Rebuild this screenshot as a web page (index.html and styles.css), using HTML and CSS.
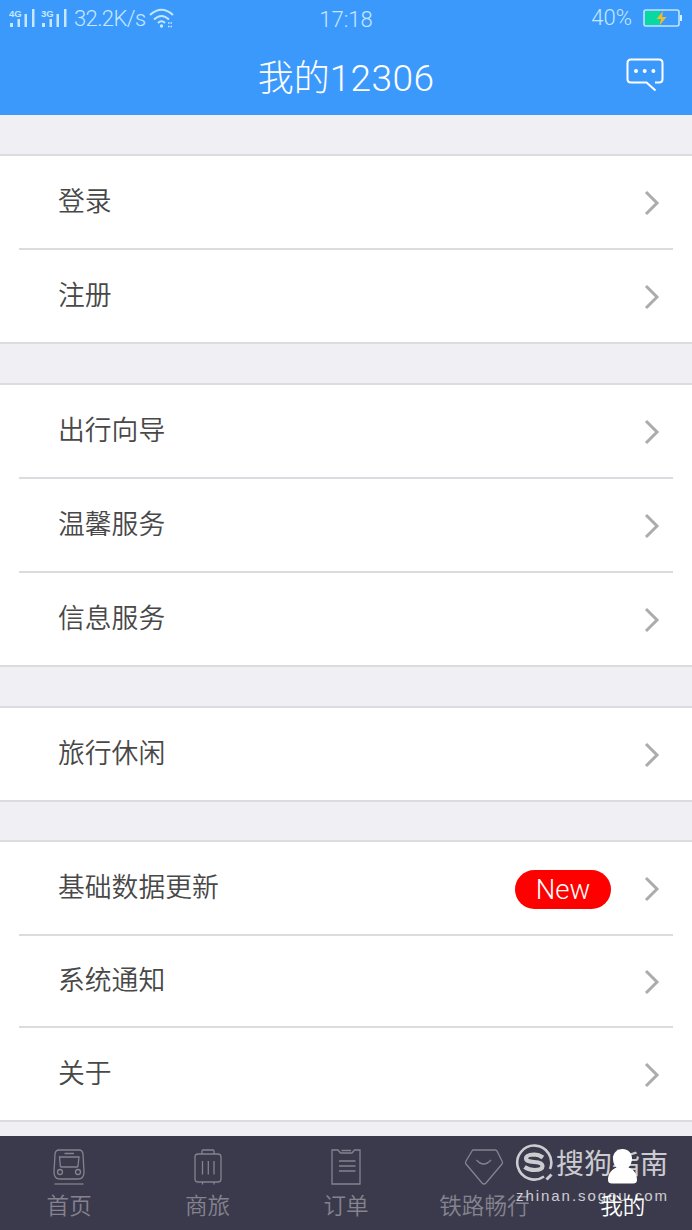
FILE: index.html
```html
<!DOCTYPE html>
<html lang="zh-CN">
<head>
  <meta charset="UTF-8">
  <title>我的12306</title>
  <link rel="stylesheet" href="styles.css">
</head>
<body>
  <header class="header">
    <div class="status-bar">
      <div class="status-left">
        <svg class="signal" width="58" height="20" viewBox="0 0 58 20">
          <g fill="currentColor">
            <rect x="1" y="15" width="3" height="4"/>
            <rect x="8.500" y="11" width="2.500" height="8"/>
            <rect x="15.500" y="6" width="2.500" height="13"/>
            <rect x="23" y="1" width="2.500" height="18"/>
            <rect x="33" y="15" width="3" height="4"/>
            <rect x="40.500" y="11" width="2.500" height="8"/>
            <rect x="47.500" y="6" width="2.500" height="13"/>
            <rect x="55" y="1" width="2.500" height="18"/>
            <text x="0" y="8.500" class="signal-text">4G</text>
            <text x="32" y="8.500" class="signal-text">3G</text>
          </g>
        </svg>
        <span class="speed">32.2K/s</span>
        <svg class="wifi" width="26" height="20" viewBox="0 0 26 20">
          <g fill="none" stroke="currentColor" stroke-width="2">
            <path d="M1 7Q12.500 -3.500 24 7"/>
            <path d="M5 11.500Q12.500 4.500 20 11.500"/>
            <path d="M9 15Q12.500 11.500 16 15"/>
          </g>
          <circle cx="12.500" cy="18" r="1.700" fill="currentColor"/>
          <path d="M19 15h4M19 18.500h4" stroke="currentColor" stroke-width="1.500" stroke-dasharray="1.500 1"/>
        </svg>
      </div>
      <span class="time">17:18</span>
      <div class="status-right">
        <span>40%</span>
        <svg class="battery" width="40" height="18" viewBox="0 0 40 18">
          <rect x="2" y="2" width="15" height="14" fill="#08d9a0"/>
          <rect x="1" y="1" width="35" height="16" rx="2" fill="none" stroke="#bfe6ff" stroke-width="1.600"/>
          <rect x="37" y="6" width="2" height="6" fill="#d5efff"/>
          <path d="M20 2L13.500 10H18L16.500 16.500L23.500 8H19Z" fill="#f2bd2c"/>
        </svg>
      </div>
    </div>
    <div class="title-bar">
      <h1>我的<span class="digits">12306</span></h1>
      <svg class="message" width="38" height="34" viewBox="0 0 38 34">
        <path d="M29 24.500H33Q36.500 24.500 36.500 21V5Q36.500 1.500 33 1.500H5Q1.500 1.500 1.500 5V21Q1.500 24.500 5 24.500H20.500L29.500 32.500" fill="none" stroke="#fff" stroke-width="2"/>
        <g fill="#fff"><circle cx="10" cy="13" r="2"/><circle cx="18.700" cy="13" r="2"/><circle cx="27.400" cy="13" r="2"/></g>
      </svg>
    </div>
  </header>

  <main class="menu">
    <section class="group">
      <a class="item"><span>登录</span><svg class="arrow" viewBox="0 0 16 26"><path d="M2 2L13 13L2 24"/></svg></a>
      <a class="item"><span>注册</span><svg class="arrow" viewBox="0 0 16 26"><path d="M2 2L13 13L2 24"/></svg></a>
    </section>
    <section class="group">
      <a class="item"><span>出行向导</span><svg class="arrow" viewBox="0 0 16 26"><path d="M2 2L13 13L2 24"/></svg></a>
      <a class="item"><span>温馨服务</span><svg class="arrow" viewBox="0 0 16 26"><path d="M2 2L13 13L2 24"/></svg></a>
      <a class="item"><span>信息服务</span><svg class="arrow" viewBox="0 0 16 26"><path d="M2 2L13 13L2 24"/></svg></a>
    </section>
    <section class="group">
      <a class="item"><span>旅行休闲</span><svg class="arrow" viewBox="0 0 16 26"><path d="M2 2L13 13L2 24"/></svg></a>
    </section>
    <section class="group group-last">
      <a class="item"><span>基础数据更新</span><b class="badge">New</b><svg class="arrow" viewBox="0 0 16 26"><path d="M2 2L13 13L2 24"/></svg></a>
      <a class="item item-short"><span>系统通知</span><svg class="arrow" viewBox="0 0 16 26"><path d="M2 2L13 13L2 24"/></svg></a>
      <a class="item"><span>关于</span><svg class="arrow" viewBox="0 0 16 26"><path d="M2 2L13 13L2 24"/></svg></a>
    </section>
  </main>

  <nav class="tabs">
    <a class="tab">
      <svg width="40" height="38" viewBox="0 0 40 38">
        <path d="M10 2H30Q33.500 2 34 6L35 24Q35 31 29 31H11Q5 31 5 24L6 6Q6.500 2 10 2Z"/>
        <path d="M15.500 5.500H25M10.500 9H30L29 18Q28.800 19 27.500 19H13Q11.500 19 11.300 18Z"/>
        <circle cx="11" cy="24" r="2.500"/><circle cx="29" cy="24" r="2.500"/>
        <path d="M5.500 36H34.500"/>
      </svg>
      <span>首页</span>
    </a>
    <a class="tab">
      <svg width="40" height="38" viewBox="0 0 40 38">
        <rect x="7" y="6" width="26" height="28" rx="3"/>
        <path d="M14 6V3Q14 2 15 2H25Q26 2 26 3V6M14.500 13V26.500M20.300 13V26.500M26 13V26.500M14.500 34V36.500M26 34V36.500"/>
      </svg>
      <span>商旅</span>
    </a>
    <a class="tab">
      <svg width="40" height="38" viewBox="0 0 40 38">
        <path d="M6 2H12L14.500 5H26L28.500 2H34V36H6ZM15.500 2.500H25M13 13H29.500M13 18H29.500M13 23H29.500"/>
      </svg>
      <span>订单</span>
    </a>
    <a class="tab">
      <svg width="40" height="38" viewBox="0 0 40 38">
        <path d="M9 2H31Q32 2 33 3L38 13Q39 15 38 16L22 35Q20 37 18 35L2 16Q1 15 2 13L8 3Q8.500 2 9 2ZM12.500 12Q19.500 20 27 12"/>
      </svg>
      <span>铁路畅行</span>
    </a>
    <a class="tab active">
      <svg width="40" height="38" viewBox="0 0 40 38">
        <path d="M19.500 1C25 1 29 5 29 10.500C29 14 27.500 17.500 25.500 19.500C30.500 21.500 34 25 34 32Q34 35.500 30 35.500H9Q5 35.500 5 32C5 25 9 21.500 13.500 19.500C11 17.500 10 14 10 10.500C10 5 14 1 19.500 1Z"/>
      </svg>
      <span>我的</span>
    </a>
  </nav>

  <!-- 水印 -->
  <div class="watermark">
    <div class="watermark-top">
      <svg width="38" height="38" viewBox="0 0 38 38">
        <path d="M29 33.500A17 17 0 1 1 35 26" fill="none" stroke="currentColor" stroke-width="2.600"/>
        <path d="M28 14.500Q24 11.500 19 11.500Q11 11.800 11 15.500Q11 18.500 19 19Q27.500 19.500 27.500 23Q27.500 27 19.500 27Q14 27 9.500 24" fill="none" stroke="currentColor" stroke-width="4.200"/>
        <path d="M31.500 36.500L36.500 31.500" stroke="currentColor" stroke-width="3"/>
      </svg>
      <span>搜狗指南</span>
    </div>
    <div class="watermark-url">zhinan.sogou.com</div>
  </div>
</body>
</html>
```
FILE: styles.css
```css
* {
  box-sizing: border-box;
}

body {
  margin: 0;
  height: 1230px;
  display: flex;
  flex-direction: column;
  position: relative;
  overflow: hidden;
  background-color: #efeff4;
  color: #484848;
  font-family: "Noto Sans CJK SC", sans-serif;
  font-weight: 350;
}

.header {
  height: 115px;
  flex: none;
  background-color: #3c99fc;
  color: #fff;
}

.status-bar {
  height: 37px;
  display: grid;
  grid-template-columns: 1fr auto 1fr;
  align-items: center;
  padding: 0 9px;
  color: #c5e8ff;
  font-family: Roboto, sans-serif;
  font-size: 22px;
}

.status-left,
.status-right {
  display: flex;
  align-items: center;
}

.status-left {
  padding-bottom: 2px;
}

.status-right {
  justify-content: flex-end;
  gap: 11px;
  padding-bottom: 2px;
}

.signal-text {
  font: bold 9.5px "Liberation Sans", sans-serif;
}

.speed {
  margin: 2px 4px 0 7px;
  letter-spacing: -0.6px;
}

.time {
  padding-top: 1px;
}

.title-bar {
  height: 78px;
  display: grid;
  grid-template-columns: 1fr auto 1fr;
  align-items: center;
}

.title-bar h1 {
  grid-column: 2;
  margin: 0;
  padding-top: 2px;
  font-size: 36px;
  line-height: 50px;
  font-weight: 300;
}

.digits {
  font-family: Roboto, sans-serif;
  font-weight: 300;
  font-size: 37px;
  letter-spacing: 0.4px;
}

.message {
  justify-self: end;
  margin-right: 28px;
  margin-bottom: 3px;
}

.menu {
  display: flex;
  flex-direction: column;
  gap: 39px;
  padding-top: 39px;
  height: 1021px;
}

.group {
  flex: none;
  background-color: #fff;
  border-top: 2px solid #dcdce0;
  border-bottom: 2px solid #dcdce0;
}

.group-last {
  margin-top: -1px;
}

.item {
  height: 94px;
  display: flex;
  align-items: center;
  margin: 0 19px;
  padding: 0 13px 0 39px;
  border-bottom: 2px solid #dcdce0;
  font-size: 26.8px;
}

.item:last-child {
  height: 92px;
  border-bottom: none;
}

.item-short {
  height: 92px;
}

.item span {
  flex: 1;
  line-height: 40px;
  padding-bottom: 5px;
}

.arrow {
  width: 16px;
  height: 26px;
  margin-top: 1px;
  fill: none;
  stroke: #acacac;
  stroke-width: 3;
}

.badge {
  width: 96px;
  height: 39px;
  margin: 2px 33px 0 0;
  border-radius: 20px;
  background-color: #ff0000;
  color: #fff;
  font: 300 27.5px/39px Roboto, sans-serif;
  text-align: center;
}

.tabs {
  height: 94px;
  flex: none;
  display: grid;
  grid-template-columns: repeat(5, 1fr);
  background-color: #3b3a4c;
  color: #84838f;
}

.tab {
  display: flex;
  flex-direction: column;
  align-items: center;
  padding-top: 12px;
  font-size: 22.6px;
  line-height: 37px;
  white-space: nowrap;
}

.tab svg {
  fill: none;
  stroke: currentColor;
  stroke-width: 1.3;
}

.active {
  color: #fff;
}

.active svg {
  fill: #fff;
  stroke: none;
}

.watermark {
  position: absolute;
  left: 515px;
  top: 1143px;
  color: #fff;
  opacity: 0.74;
}

.watermark-top {
  display: flex;
  align-items: center;
  gap: 3px;
  height: 38px;
  font-size: 28px;
  font-weight: 400;
}

.watermark-url {
  font: 15px/18px "Liberation Sans", sans-serif;
  letter-spacing: 1.95px;
  padding: 6px 0 0 1px;
}
```
